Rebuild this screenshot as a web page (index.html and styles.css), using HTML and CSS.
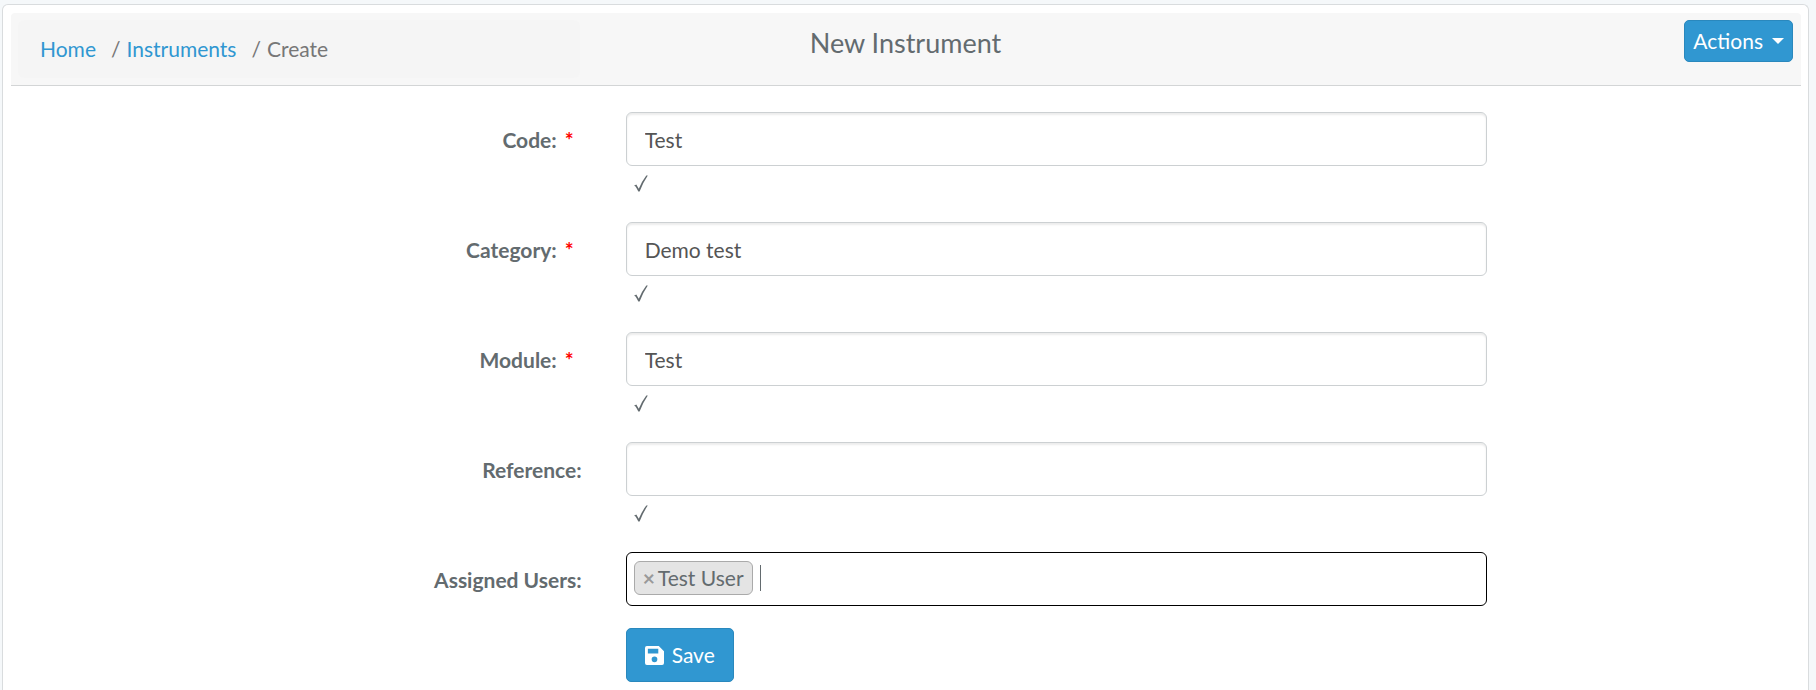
FILE: index.html
```html
<!DOCTYPE html>
<html lang="en">
<head>
<meta charset="utf-8">
<title>New Instrument</title>
<link rel="stylesheet" href="styles.css">
</head>
<body>
<svg class="symbols" aria-hidden="true">
  <symbol id="check" viewBox="0 0 14 17"><path d="M0 10.800L2.300 9.600L4.800 13.800Q8 6 12.300 0.500H13.800Q9 7.500 5.600 16.500H4.300Q2.500 12.600 1.300 11.200Z" fill="currentColor"/></symbol>
</svg>
<main class="panel">
  <header class="panel-header">
    <nav class="breadcrumb" aria-label="Breadcrumb">
      <a href="#">Home</a>
      <span class="separator">/</span>
      <a href="#">Instruments</a>
      <span class="separator">/</span>
      <span class="current">Create</span>
    </nav>
    <h1 class="title">New Instrument</h1>
    <div class="header-actions">
      <button class="button button-actions" type="button">Actions <span class="caret"></span></button>
    </div>
  </header>
  <form class="form">
    <div class="row">
      <label class="label" for="code">Code:<span class="required">*</span></label>
      <div class="field"><input class="control" id="code" type="text" value="Test"><svg class="valid" role="img" aria-label="Valid"><use href="#check"/></svg></div>
    </div>
    <div class="row">
      <label class="label" for="category">Category:<span class="required">*</span></label>
      <div class="field"><input class="control" id="category" type="text" value="Demo test"><svg class="valid" role="img" aria-label="Valid"><use href="#check"/></svg></div>
    </div>
    <div class="row">
      <label class="label" for="module">Module:<span class="required">*</span></label>
      <div class="field"><input class="control" id="module" type="text" value="Test"><svg class="valid" role="img" aria-label="Valid"><use href="#check"/></svg></div>
    </div>
    <div class="row">
      <label class="label" for="reference">Reference:</label>
      <div class="field"><input class="control" id="reference" type="text"><svg class="valid" role="img" aria-label="Valid"><use href="#check"/></svg></div>
    </div>
    <div class="row row-users">
      <label class="label" for="users">Assigned Users:</label>
      <div class="field">
        <div class="tags">
          <span class="tag"><button class="tag-remove" type="button" aria-label="Remove Test User">×</button>Test User</span>
          <span class="text-cursor"></span>
          <input class="tags-input" id="users" type="text">
        </div>
      </div>
    </div>
    <div class="row">
      <div class="field field-submit">
        <button class="button button-save" type="submit">
          <svg class="save-icon" viewBox="0 0 20 20" aria-hidden="true"><path fill="currentColor" fill-rule="evenodd" d="M2 0H14.500L20 5.500V18Q20 20 18 20H2Q0 20 0 18V2Q0 0 2 0ZM3 3V8H14V3ZM10 11A3 3 0 1 0 10 17A3 3 0 1 0 10 11Z"/></svg>
          Save
        </button>
      </div>
    </div>
  </form>
</main>
</body>
</html>
```

FILE: styles.css
```css
* { box-sizing: border-box; }

body {
  margin: 0;
  padding: 4px 7px 0 2px;
  background: #f5f8fa;
  color: #636b6f;
  font-family: Lato, "DejaVu Sans", sans-serif;
  font-size: 21px;
  line-height: 32px;
}

.symbols { display: none; }

.panel {
  min-height: calc(100vh - 4px);
  background: #fff;
  border: 1px solid #d9dcde;
  border-bottom: 0;
  border-radius: 6px 6px 0 0;
}

.panel-header {
  display: grid;
  grid-template-columns: 1fr 1fr 1fr;
  gap: 44px;
  align-items: start;
  margin: 8px 7px 0 8px;
  padding: 7px 8px 7px 7px;
  background: #f7f7f7;
  border-bottom: 1px solid #d3d5d6;
  border-radius: 4px 4px 0 0;
}

.breadcrumb {
  display: flex;
  gap: 6px;
  padding: 13px 22px;
  background: #f5f5f5;
  border-radius: 6px;
  color: #777;
}

.breadcrumb a {
  color: #3097d1;
  text-decoration: none;
}

.separator { margin-left: 9px; }

.title {
  margin: 7px 0 0;
  font-size: 27px;
  font-weight: 400;
  line-height: 32px;
  text-align: center;
}

.header-actions {
  display: flex;
  justify-content: flex-end;
}

.button {
  display: inline-flex;
  align-items: center;
  border: 1px solid #2a88bd;
  border-radius: 5px;
  background: #3097d1;
  color: #fff;
  font: inherit;
}

.button-actions {
  gap: 9px;
  padding: 4px 8px;
}

.caret {
  border: 6px solid transparent;
  border-top-color: #fff;
  border-bottom: 0;
}

.form { padding-top: 26px; }

.row {
  display: grid;
  grid-template-columns: repeat(12, 1fr);
}

.label {
  grid-column: span 4;
  padding: 12px 23px 0;
  font-weight: 700;
  text-align: right;
}

.required {
  margin: 0 8px;
  color: #f00;
}

.field {
  grid-column: span 6;
  min-height: 110px;
  padding: 0 20px 0 21px;
}

.control {
  display: block;
  width: 100%;
  height: 54px;
  padding: 8px 18px;
  border: 1px solid #ccd0d2;
  border-radius: 6px;
  box-shadow: inset 0 2px 2px rgba(0, 0, 0, 0.08);
  background: #fff;
  color: #555;
  font: inherit;
}

.control:focus { outline: none; }

.valid {
  display: block;
  width: 14px;
  height: 17px;
  margin: 9px 8px 0;
}

.row-users .field { min-height: 76px; }

.tags {
  display: flex;
  align-items: center;
  height: 54px;
  padding: 7px 7px 10px;
  border: 1px solid #000;
  border-radius: 6px;
}

.tag {
  display: flex;
  align-items: center;
  padding: 0 8px;
  border: 1px solid #aaa;
  border-radius: 6px;
  background: #e4e4e4;
}

.tag-remove {
  margin: 0 3px 0 0;
  padding: 0;
  border: 0;
  background: none;
  color: #999;
  font: inherit;
  font-weight: 700;
}

.text-cursor {
  width: 1px;
  height: 26px;
  margin-left: 7px;
  background: #636b6f;
}

.tags-input {
  flex: 1;
  min-width: 0;
  border: 0;
  background: none;
  font: inherit;
  outline: none;
}

.field-submit {
  grid-column: 5 / span 6;
  min-height: 0;
}

.button-save {
  gap: 8px;
  height: 54px;
  padding: 0 18px;
}

.save-icon {
  width: 19px;
  height: 19px;
}
```
